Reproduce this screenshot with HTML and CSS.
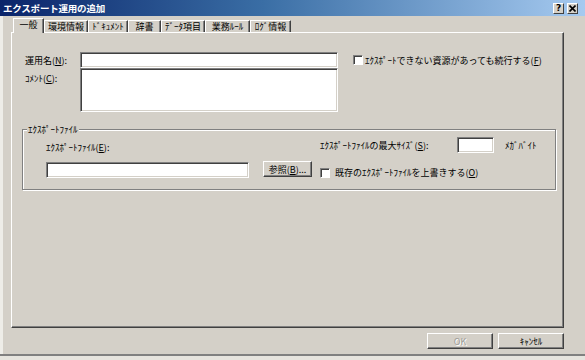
FILE: index.html
```html
<!DOCTYPE html>
<html>
<head>
    <meta charset="utf-8" />
    <title>エクスポート運用の追加</title>
    <link rel="stylesheet" href="styles.css">
</head>
<body>
<div class="window">
    <div class="titlebar">
        <span class="title">エクスポート運用の追加</span>
        <div class="cap-btns">
            <span class="cap-btn">?</span>
            <span class="cap-btn">
                <svg width="7" height="7" viewBox="0 0 7 7"><path d="M0.5 0.5L6.5 6.5M6.5 0.5L0.5 6.5" stroke="#000" stroke-width="1.6"/></svg>
            </span>
        </div>
    </div>
    <div class="client">
        <div class="tabs">
            <div class="tab active" style="width:31px">一般</div>
            <div class="tab" style="width:44px">環境情報</div>
            <div class="tab" style="width:40px">ﾄﾞｷｭﾒﾝﾄ</div>
            <div class="tab" style="width:33px">辞書</div>
            <div class="tab" style="width:44px">ﾃﾞｰﾀ項目</div>
            <div class="tab" style="width:45px">業務ﾙｰﾙ</div>
            <div class="tab" style="width:41px">ﾛｸﾞ情報</div>
        </div>
        <div class="panel">
            <div class="form">
                <div class="lbl">運用名(<u>N</u>):</div>
                <div class="field"></div>
                <div class="check-row first">
                    <span class="checkbox"></span>
                    <span>ｴｸｽﾎﾟｰﾄできない資源があっても続行する(<u>F</u>)</span>
                </div>
                <div class="lbl lbl-top">ｺﾒﾝﾄ(<u>C</u>):</div>
                <div class="field"></div>
            </div>
            <div class="group">
                <span class="group-title">ｴｸｽﾎﾟｰﾄﾌｧｲﾙ</span>
                <div class="group-row">
                    <div class="file-label">ｴｸｽﾎﾟｰﾄﾌｧｲﾙ(<u>E</u>):</div>
                    <div class="size-label">ｴｸｽﾎﾟｰﾄﾌｧｲﾙの最大ｻｲｽﾞ(<u>S</u>):</div>
                    <div class="field size"></div>
                    <div class="unit">ﾒｶﾞﾊﾞｲﾄ</div>
                </div>
                <div class="group-row row2">
                    <div class="field file"></div>
                    <div class="btn browse">参照(<u>B</u>)...</div>
                    <div class="check-row second">
                        <span class="checkbox"></span>
                        <span>既存のｴｸｽﾎﾟｰﾄﾌｧｲﾙを上書きする(<u>O</u>)</span>
                    </div>
                </div>
            </div>
        </div>
        <div class="actions">
            <div class="btn disabled">OK</div>
            <div class="btn">ｷｬﾝｾﾙ</div>
        </div>
    </div>
</div>
</body>
</html>
```
FILE: styles.css
```css
*{margin:0;padding:0;box-sizing:border-box;}
html,body{width:585px;height:360px;overflow:hidden;}
body{background:#e6e4de;font:normal 9px/11px "Noto Sans CJK JP","Noto Sans",sans-serif;color:#000;}
u{text-decoration:underline;text-underline-offset:1px;}

.window{
    width:585px;
    height:356px;
    background:#d4d0c8;
    border-bottom:2px solid #808080;
}
.titlebar{
    height:16px;
    display:flex;
    align-items:center;
    justify-content:space-between;
    padding:0 7px 0 3px;
    background:linear-gradient(to right,#0a246a 0%,#3a6ea5 45%,#a6caf0 100%);
}
.title{color:#fff;font-weight:bold;font-size:9.5px;line-height:16px;letter-spacing:-0.2px;}
.cap-btns{display:flex;gap:3px;}
.cap-btn{
    width:11px;
    height:11px;
    display:flex;
    align-items:center;
    justify-content:center;
    background:#d4d0c8;
    border:1px solid;
    border-color:#fff #404040 #404040 #fff;
    font:bold 9px/9px "DejaVu Sans",sans-serif;
}

.client{
    height:338px;
    border-left:3px solid #eeede8;
    padding:2px 0 0 8px;
}
.tabs{display:flex;align-items:flex-end;height:14px;padding-left:2px;}
.tab{
    height:12px;
    text-align:center;
    line-height:11px;
    border-top:1px solid #fff;
    border-left:1px solid #fff;
    border-right:1px solid #404040;
    box-shadow:inset -1px 0 #808080;
    white-space:nowrap;
}
.tab.active{
    position:relative;
    z-index:1;
    height:15px;
    margin-bottom:-1px;
    line-height:12px;
    background:#d4d0c8;
}

.panel{
    width:553px;
    height:296px;
    border:1px solid;
    border-color:#fff #404040 #404040 #fff;
    box-shadow:inset -1px -1px #808080;
}
.form{
    display:grid;
    grid-template-columns:55px 258px auto;
    grid-template-rows:16px 44px;
    padding:19px 0 0 13px;
}
.lbl{align-self:center;white-space:nowrap;}
.lbl-top{align-self:start;padding-top:5px;}
.field{
    background:#fff;
    border:1px solid;
    border-color:#808080 #fff #fff #808080;
    box-shadow:inset 1px 1px #404040,inset -1px -1px #d4d0c8;
}
.check-row{display:flex;align-items:center;white-space:nowrap;}
.check-row.first{margin-left:15px;gap:2px;}
.check-row.second{margin:6px 0 0 8px;gap:5px;}
.checkbox{
    width:10px;
    height:10px;
    background:#fff;
    border:1px solid;
    border-color:#808080 #fff #fff #808080;
    box-shadow:inset 1px 1px #404040;
}

.group{
    position:relative;
    width:534px;
    height:61px;
    margin:17px 0 0 10px;
    padding:7px 0 0 23px;
    border:1px solid #808080;
    box-shadow:inset 1px 1px #fff,1px 1px #fff;
}
.group-title{
    position:absolute;
    top:-6px;
    left:4px;
    padding:0 1px;
    background:#d4d0c8;
}
.group-row{display:flex;height:16px;align-items:center;white-space:nowrap;}
.file-label{width:274px;align-self:flex-end;line-height:10px;}
.size-label{width:137px;}
.field.size{width:37px;height:16px;}
.unit{margin-left:11px;}
.row2{margin-top:8px;height:17px;align-items:flex-start;}
.field.file{width:203px;height:16px;margin-top:1px;}
.btn{
    height:16px;
    display:flex;
    align-items:center;
    justify-content:center;
    border:1px solid;
    border-color:#fff #404040 #404040 #fff;
    box-shadow:inset -1px -1px #808080;
    white-space:nowrap;
}
.btn.browse{width:49px;margin-left:14px;}
.actions{
    width:553px;
    display:flex;
    justify-content:flex-end;
    gap:5px;
    margin-top:5px;
}
.actions .btn{width:66px;}
.btn.disabled{color:#a09e98;text-shadow:1px 1px #fff;}
```
